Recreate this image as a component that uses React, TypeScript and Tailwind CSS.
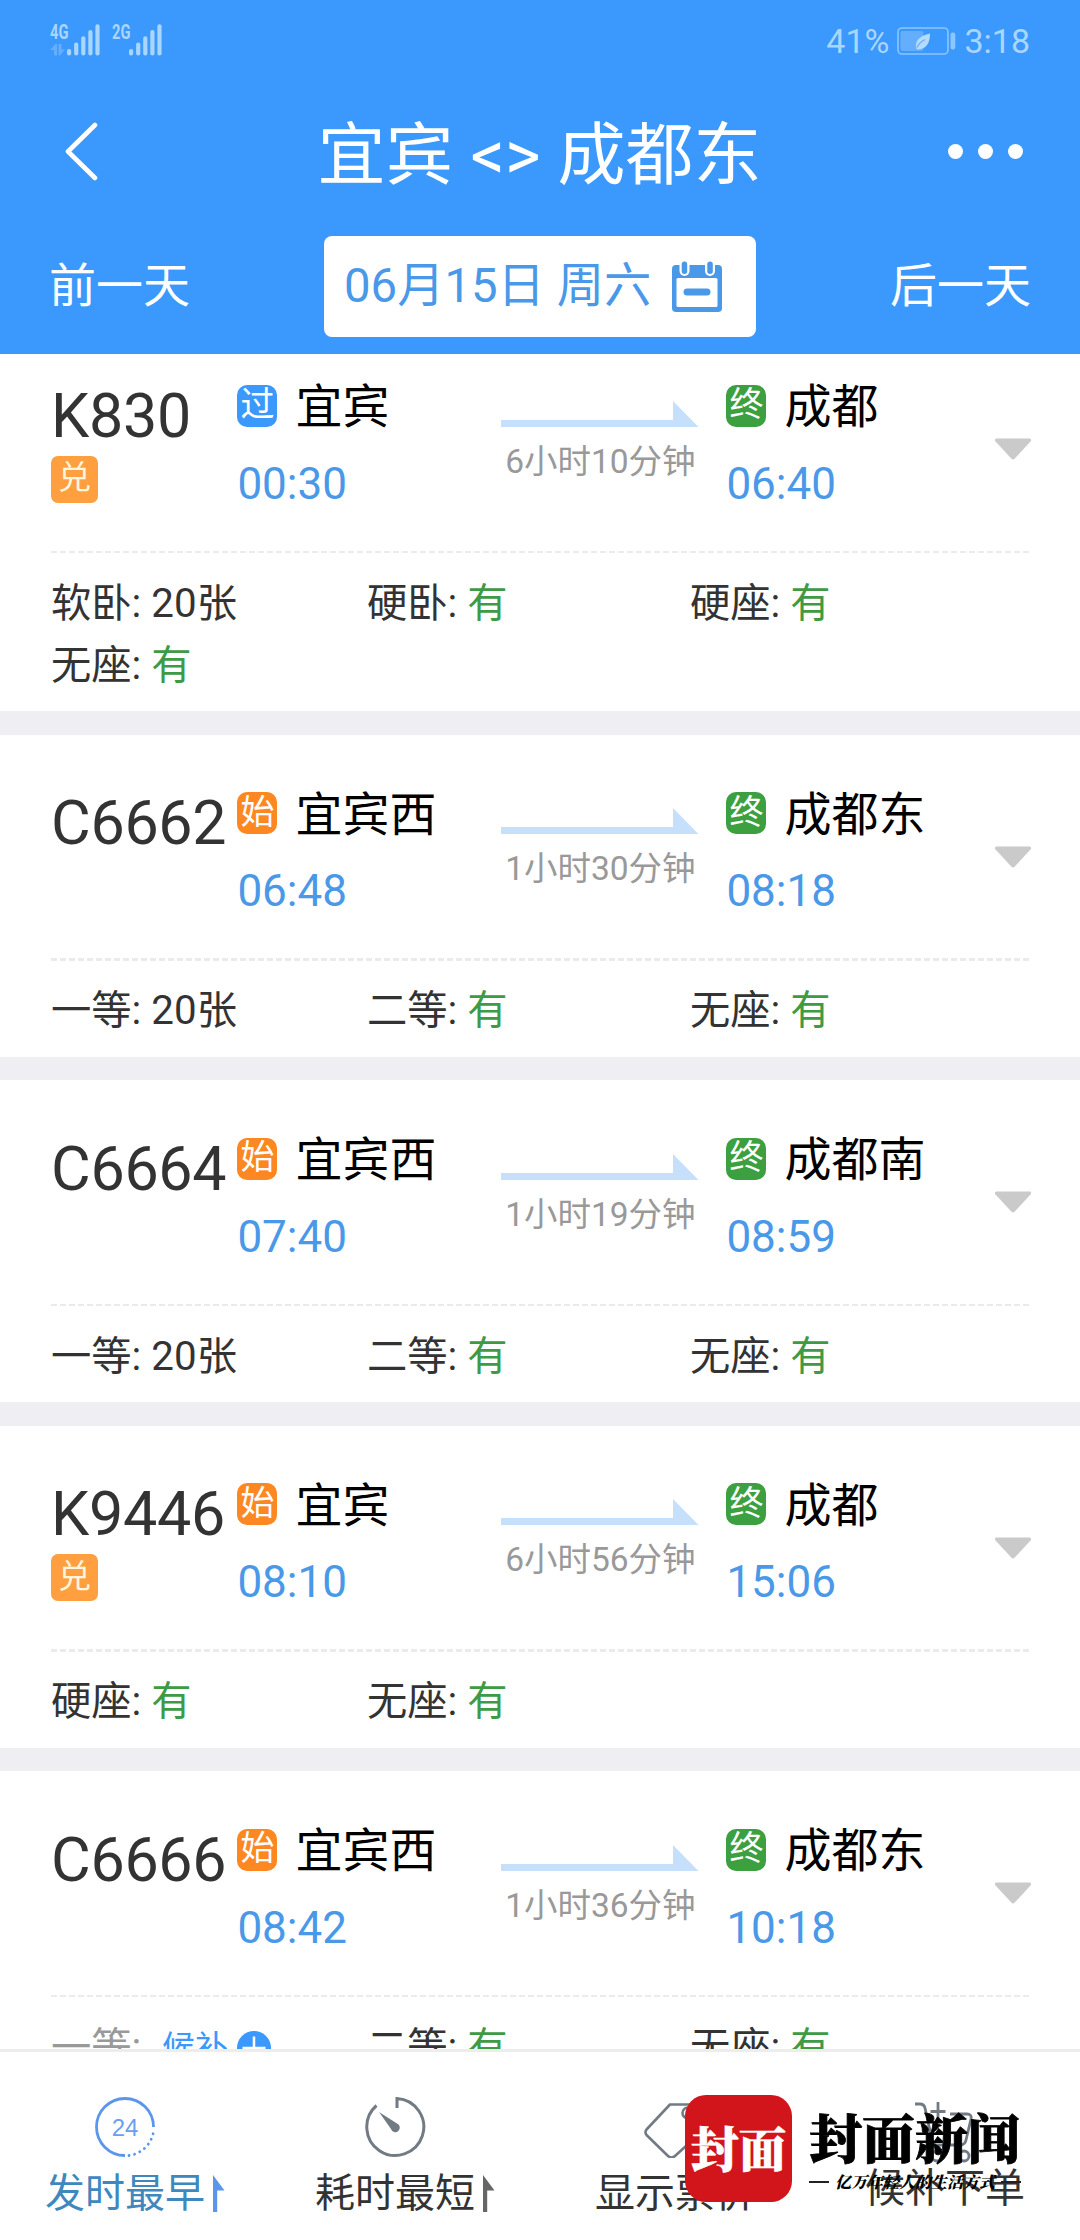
import { Fragment } from "react";
import type { ReactNode } from "react";

type StationKind = "pass" | "start" | "end";

interface Seat {
	name: string;
	left?: string;
	waitlist?: boolean;
}

interface Train {
	code: string;
	exchange?: boolean;
	fromKind: StationKind;
	from: string;
	to: string;
	depart: string;
	arrive: string;
	duration: string;
	seats: Seat[];
}

const TRAINS: Train[] = [
	{
		code: "K830",
		exchange: true,
		fromKind: "pass",
		from: "宜宾",
		to: "成都",
		depart: "00:30",
		arrive: "06:40",
		duration: "6小时10分钟",
		seats: [{ name: "软卧", left: "20张" }, { name: "硬卧" }, { name: "硬座" }, { name: "无座" }],
	},
	{
		code: "C6662",
		fromKind: "start",
		from: "宜宾西",
		to: "成都东",
		depart: "06:48",
		arrive: "08:18",
		duration: "1小时30分钟",
		seats: [{ name: "一等", left: "20张" }, { name: "二等" }, { name: "无座" }],
	},
	{
		code: "C6664",
		fromKind: "start",
		from: "宜宾西",
		to: "成都南",
		depart: "07:40",
		arrive: "08:59",
		duration: "1小时19分钟",
		seats: [{ name: "一等", left: "20张" }, { name: "二等" }, { name: "无座" }],
	},
	{
		code: "K9446",
		exchange: true,
		fromKind: "start",
		from: "宜宾",
		to: "成都",
		depart: "08:10",
		arrive: "15:06",
		duration: "6小时56分钟",
		seats: [{ name: "硬座" }, { name: "无座" }],
	},
	{
		code: "C6666",
		fromKind: "start",
		from: "宜宾西",
		to: "成都东",
		depart: "08:42",
		arrive: "10:18",
		duration: "1小时36分钟",
		seats: [{ name: "一等", waitlist: true }, { name: "二等" }, { name: "无座" }],
	},
];

const KIND_LABEL: Record<StationKind, string> = { pass: "过", start: "始", end: "终" };

const KIND_COLOR: Record<StationKind, string> = {
	pass: "bg-[#3b98fc]",
	start: "bg-[#fd8721]",
	end: "bg-[#3c9f40]",
};

function SignalBars() {
	return (
		<svg width="34" height="32" viewBox="0 0 34 32" fill="#a9d6ff">
			<rect x="0" y="25" width="4.2" height="6.4" rx="2" />
			<rect x="7.1" y="18.6" width="4.2" height="12.8" rx="2" />
			<rect x="14.2" y="12.3" width="4.2" height="19.1" rx="2" />
			<rect x="21.3" y="6" width="4.2" height="25.4" rx="2" />
			<rect x="28.4" y="0.3" width="4.2" height="31.1" rx="2" />
		</svg>
	);
}

function StatusBar() {
	return (
		<div className="flex h-20 items-start text-[#a9d6ff]">
			<div className="ml-[50px] flex w-[17px] flex-col pt-6">
				<span className="w-[18px] origin-left scale-x-[0.7] text-[21px] leading-[16px] font-bold">4G</span>
				<svg className="mt-1" width="17" height="12" viewBox="0 0 17 12" fill="#64aefd">
					<path d="M0 6 5.5 0H7v11.5H4V6ZM8.5 0h3v5.500H15l-5 6H8.500Z" />
				</svg>
			</div>
			<div className="pt-6">
				<SignalBars />
			</div>
			<span className="mt-6 ml-[11px] w-[17px] origin-left scale-x-[0.7] text-[21px] leading-[16px] font-bold">
				2G
			</span>
			<div className="pt-6">
				<SignalBars />
			</div>
			<div className="mt-[21px] mr-[50px] ml-auto flex items-center text-[34px] leading-10">
				<span>41%</span>
				<svg className="ml-2" width="60" height="28" viewBox="0 0 60 28">
					<rect x="1" y="1" width="50" height="26" rx="4" fill="none" stroke="#8cc6ff" strokeWidth="1.6" />
					<rect x="3.500" y="4" width="23" height="20" rx="2" fill="#64aefd" />
					<rect x="53.500" y="5.500" width="4.800" height="17" rx="2" fill="#8cc6ff" />
					<path d="M33 6.500C25 8.500 18 12 19 20c.3 2 1 2.500 2 2.500C30 22 33 15 33 6.500Z" fill="#b5dbff" />
					<path d="M20 20.500C22 16 25 14 28 12.500" fill="none" stroke="#64aefd" strokeWidth="1.300" />
				</svg>
				<span className="ml-[7px]">3:18</span>
			</div>
		</div>
	);
}

function CalendarIcon() {
	return (
		<svg className="-mt-px" width="50" height="51" viewBox="0 0 50 51">
			<rect x="0" y="4" width="50" height="47" rx="4" fill="#4a98e8" />
			<rect x="4.500" y="17" width="41" height="29" rx="1.500" fill="#fff" />
			<rect x="11.500" y="27.500" width="27" height="7" rx="3.500" fill="#4a98e8" />
			<rect x="7.500" y="-2" width="10" height="17" rx="5" fill="#fff" />
			<rect x="33" y="-2" width="10" height="17" rx="5" fill="#fff" />
			<rect x="9.700" y="0.500" width="5.500" height="12.500" rx="2.700" fill="#4a98e8" />
			<rect x="35.300" y="0.500" width="5.500" height="12.500" rx="2.700" fill="#4a98e8" />
		</svg>
	);
}

function Header() {
	return (
		<header className="h-[354px] bg-[#3b98fc] text-white">
			<StatusBar />
			<div className="flex h-[142px] items-center pr-[57px] pl-[64px]">
				<svg width="35" height="60" viewBox="0 0 35 60" fill="none" stroke="#fff" strokeWidth="4.600">
					<path d="M31 4 4 30.500 31 57" strokeLinecap="round" strokeLinejoin="round" />
				</svg>
				<h1 className="ml-[32px] flex-1 pt-[10px] text-center text-[68px] leading-[80px]">宜宾 &lt;&gt; 成都东</h1>
				<div className="flex gap-[15px]">
					<i className="size-[15px] rounded-full bg-white" />
					<i className="size-[15px] rounded-full bg-white" />
					<i className="size-[15px] rounded-full bg-white" />
				</div>
			</div>
			<div className="mt-[14px] flex h-[101px] items-center justify-between px-[49px] text-[47px]">
				<span className="pb-px leading-[60px]">前一天</span>
				<div className="flex h-full w-[432px] items-center rounded-lg bg-white pl-[20px] text-[#4a98e8]">
					<span className="w-[328px] pb-px text-[47.3px] leading-[60px] whitespace-nowrap">06月15日 周六</span>
					<CalendarIcon />
				</div>
				<span className="pb-px leading-[60px]">后一天</span>
			</div>
		</header>
	);
}

function Station({ kind, name, time }: { kind: StationKind; name: string; time: string }) {
	return (
		<div className="pt-[57.5px]">
			<div className="flex h-[42px] items-center">
				<span
					className={`flex h-[42px] w-10 items-center justify-center rounded-[10px] text-[34px] leading-[38px] text-white ${KIND_COLOR[kind]}`}
				>
					<span className="pb-[3px]">{KIND_LABEL[kind]}</span>
				</span>
				<span className="ml-[18px] pt-0.5 text-[47px] leading-[47px] whitespace-nowrap text-black">{name}</span>
			</div>
			<div className="mt-[35px] text-[44px] leading-[44px] text-[#4a98e8]">{time}</div>
		</div>
	);
}

function SeatInfo({ seat }: { seat: Seat }) {
	if (seat.waitlist) {
		return (
			<div className="flex items-center text-[#999]">
				<span className="w-[111px]">{seat.name}:</span>
				<span className="text-[33px] text-[#3b98fc]">候补</span>
				<svg className="ml-[9px]" width="34" height="34" viewBox="0 0 34 34">
					<circle cx="17" cy="17" r="17" fill="#3b98fc" />
					<path d="M17 5.500v23M5.500 17h23" stroke="#fff" strokeWidth="2.500" />
				</svg>
			</div>
		);
	}
	return (
		<div>
			{seat.name}: {seat.left ?? <span className="text-[#3f9a45]">有</span>}
		</div>
	);
}

function TrainCard({ train }: { train: Train }) {
	return (
		<article className="shrink-0 bg-white px-[51px] pb-[14.6px]">
			<div className="flex h-[223.5px]">
				<div className="w-[186.4px] pt-[57.5px]">
					<div className="text-[61px] leading-[62px] tracking-[-0.3px] text-[#333]">{train.code}</div>
					{train.exchange && (
						<div className="mt-[9px] flex size-[47px] items-center justify-center rounded-[7px] bg-[#ff9f40] text-[33px] leading-[44px] text-[#fff5dc]">
							<span className="pb-0.5">兑</span>
						</div>
					)}
				</div>
				<div className="w-[264px]">
					<Station kind={train.fromKind} name={train.from} time={train.depart} />
				</div>
				<div className="w-[198px] pt-[73.5px] text-center">
					<svg width="198" height="26" viewBox="0 0 198 26" fill="#c6e0fc">
						<path d="M0 19h172V0l25.500 26H0Z" />
					</svg>
					<div className="mt-[18px] text-[33.500px] leading-[34px] whitespace-nowrap text-[#999]">{train.duration}</div>
				</div>
				<div className="ml-[27px] w-[267.6px]">
					<Station kind="end" name={train.to} time={train.arrive} />
				</div>
				<svg className="mt-[111px] -mr-1 shrink-0" width="38" height="22" viewBox="0 0 38 22" fill="#cacaca">
					<path d="M2 .5h34q2 1 .5 3L20.500 20.800q-1.500 1.200-3 0L1.500 3.500Q0 1.500 2 .5Z" />
				</svg>
			</div>
			<div className="h-[2.5px] bg-[repeating-linear-gradient(90deg,#ebebeb_0_6px,transparent_6px_9px)]" />
			<div className="grid grid-cols-[316px_323px_1fr] pt-[19.5px] text-[40.3px] leading-[62px] text-[#333]">
				{train.seats.map((seat) => (
					<SeatInfo key={seat.name} seat={seat} />
				))}
			</div>
		</article>
	);
}

function SortArrow() {
	return (
		<svg className="ml-2" width="12" height="37" viewBox="0 0 12 37" fill="currentColor">
			<path d="M0 0 11.500 15.500H0ZM0 15.500h4.200V37H0Z" />
		</svg>
	);
}

function ClockIcon() {
	return (
		<svg width="62" height="62" viewBox="0 0 62 62" fill="none" stroke="#5b96ec">
			<path d="M59.500 31A28.500 28.500 0 1 0 31 59.500" strokeWidth="2.800" />
			<path d="M35 59.500A28.500 28.500 0 0 0 59.500 35.500" strokeWidth="2.800" strokeDasharray="0.100 5.600" strokeLinecap="round" />
			<text
				x="31"
				y="40"
				fontSize="24"
				textAnchor="middle"
				fill="#6b9fef"
				stroke="none"
				fontFamily="Liberation Sans, sans-serif"
			>
				24
			</text>
		</svg>
	);
}

function TimerIcon() {
	return (
		<svg width="62" height="62" viewBox="0 0 62 62" fill="none" stroke="#727b84" strokeWidth="3">
			<path d="M33 12V2.500A28.500 28.500 0 1 1 12.500 9.500" />
			<path d="M15 16 33 27.500a4.500 4.500 0 1 1-6 5.500Z" fill="#727b84" stroke="none" />
		</svg>
	);
}

function TagIcon() {
	return (
		<svg width="62" height="62" viewBox="0 0 62 62" fill="none" stroke="#727b84" strokeWidth="2.600">
			<path d="M26 8.500h28a5 5 0 0 1 5 5v21L31 60q-3.500 3-7 0L2.500 39q-2-2.500 0-5.500Z" strokeLinejoin="round" />
			<circle cx="44" cy="17" r="5.500" />
		</svg>
	);
}

function CartIcon() {
	return (
		<svg width="62" height="62" viewBox="0 0 62 62" fill="none" stroke="#727b84" strokeWidth="2.800">
			<path d="M1 3h5q4 0 5 4l7 32q1 5 6 5h22q5 0 6-5l5-21q1-5-4-5H36" />
			<path d="M24 1v19M16.500 10.500h15" />
			<circle cx="23" cy="55" r="5" />
			<circle cx="50" cy="55" r="5" />
		</svg>
	);
}

function Tab({
	icon,
	label,
	className,
	arrow,
}: {
	icon: ReactNode;
	label: string;
	className: string;
	arrow?: ReactNode;
}) {
	return (
		<div className={`flex w-[270px] items-end justify-center text-[40px] leading-[48px] ${className}`}>
			<div className="flex w-[160px] flex-col items-center gap-[inherit]">
				{icon}
				<span className="whitespace-nowrap">{label}</span>
			</div>
			{arrow}
		</div>
	);
}

function BottomBar() {
	return (
		<nav className="flex h-[191px] items-start border-t-[3px] border-[#ededed] bg-white">
			<Tab
				icon={<ClockIcon />}
				label="发时最早"
				className="gap-x-0 gap-y-[12px] pt-[44px] text-[#3f88bd]"
				arrow={
					<span className="pb-[6px] text-[#5b96ec]">
						<SortArrow />
					</span>
				}
			/>
			<Tab
				icon={<TimerIcon />}
				label="耗时最短"
				className="gap-x-0 gap-y-[12px] pt-[44px] text-[#333]"
				arrow={
					<span className="pb-[6px] text-[#666]">
						<SortArrow />
					</span>
				}
			/>
			<Tab icon={<TagIcon />} label="显示票价" className="gap-y-[12px] pt-[44px] text-[#333]" />
			<Tab icon={<CartIcon />} label="候补下单" className="gap-y-[2px] pt-[49px] text-[#333]" />
		</nav>
	);
}

function Watermark() {
	return (
		<div className="absolute top-[2095px] left-[685px] flex font-['Noto_Serif_CJK_SC','Noto_Sans_CJK_SC',serif] font-black">
			<div className="flex size-[107px] items-center justify-center rounded-[21px] bg-[#d1151a] pb-1 text-[48px] leading-none text-white [-webkit-text-stroke:0.5px_#fff]">
				封面
			</div>
			<div className="ml-[17px] pt-[14px] text-black">
				<div className="text-[53px] leading-[54px] whitespace-nowrap [-webkit-text-stroke:0.8px_#000]">封面新闻</div>
				<div className="mt-[9px] flex items-center text-[16px] leading-[20px] whitespace-nowrap italic">
					<i className="mr-[6px] h-[1.5px] w-[20px] bg-[#222]" />
					亿万年轻人的生活方式
					<i className="ml-[6px] h-[1.5px] w-[20px] bg-[#222]" />
				</div>
			</div>
		</div>
	);
}

export default function App() {
	return (
		<div
			lang="zh-CN"
			className="relative flex h-[2240px] w-[1080px] flex-col overflow-hidden bg-white font-[Roboto,'Noto_Sans_CJK_SC',sans-serif]"
		>
			<Header />
			<main className="flex min-h-0 flex-1 flex-col overflow-hidden">
				{/* the list is scrolled a little, so the first card is cut at its top */}
				<div className="-mt-[27px] flex flex-col">
					{TRAINS.map((train, index) => (
						<Fragment key={train.code}>
							{index > 0 && <div className="h-[23.5px] shrink-0 bg-[#eeeef3]" />}
							<TrainCard train={train} />
						</Fragment>
					))}
				</div>
			</main>
			<BottomBar />
			<Watermark />
		</div>
	);
}
